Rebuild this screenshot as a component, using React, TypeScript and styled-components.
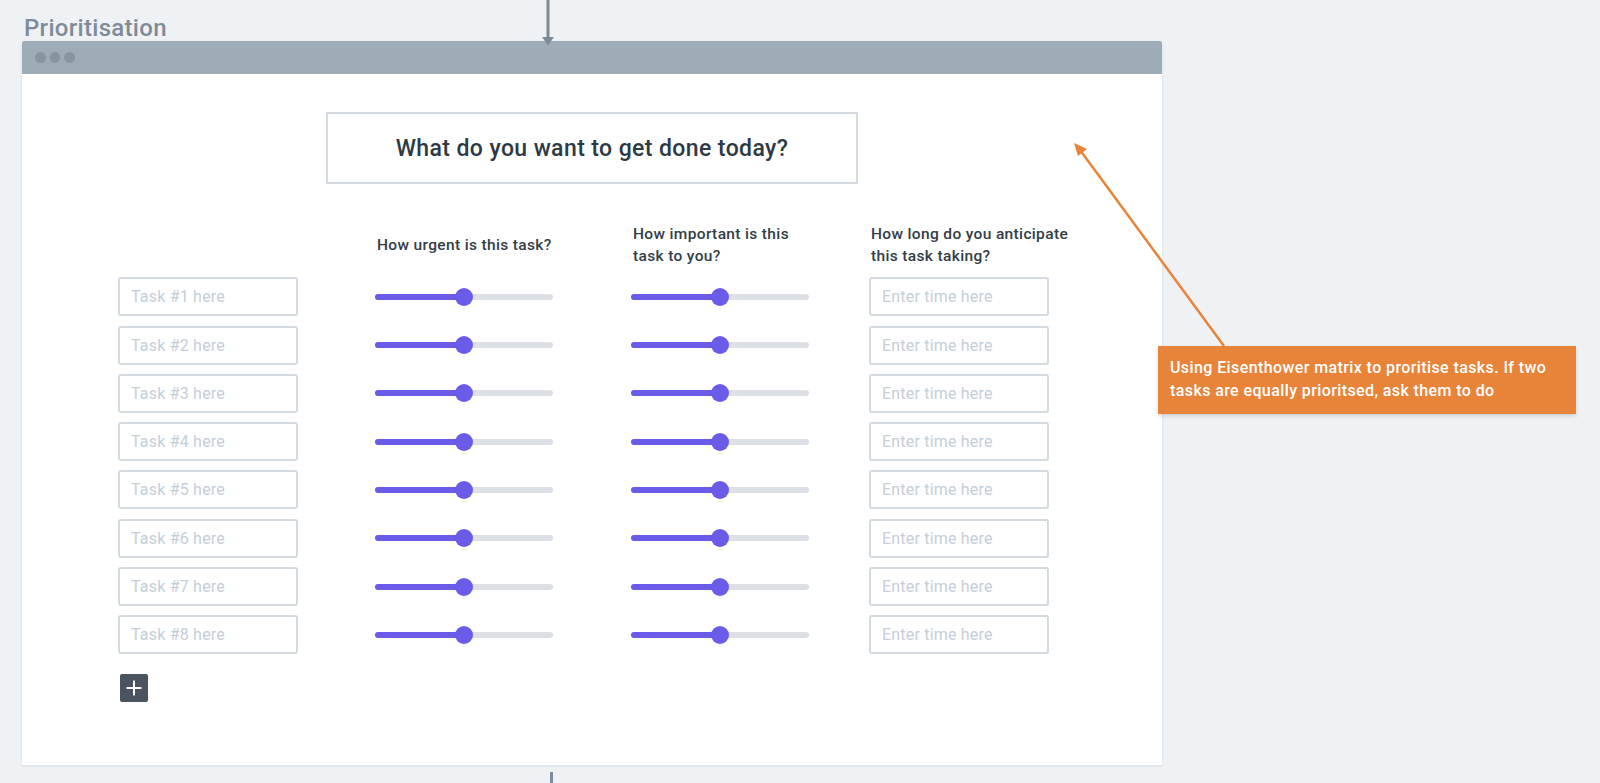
import React from 'react';
import styled, { createGlobalStyle } from 'styled-components';

const GlobalStyle = createGlobalStyle`
  html, body { margin: 0; padding: 0; }
  body {
    background: #eff2f5;
    font-family: Roboto, "Noto Sans", "Liberation Sans", sans-serif;
    overflow: hidden;
  }
`;

const tasks = [1, 2, 3, 4, 5, 6, 7, 8];

const App = () => {
  return (
    <>
      <GlobalStyle />
      <Canvas>
        <Connectors width="1600" height="783" viewBox="0 0 1600 783">
          <line x1="548" y1="0" x2="548" y2="39" stroke="#7d8b99" strokeWidth="3" />
          <path d="M542 37 L548 45.5 L554 37 Z" fill="#7d8b99" />
          <line x1="551.5" y1="772" x2="551.5" y2="783" stroke="#7d8b99" strokeWidth="3" />
          <line x1="1224" y1="346" x2="1080" y2="150" stroke="#e8843a" strokeWidth="2.5" />
          <path d="M1074 143 L1087 149 L1078 156 Z" fill="#e8843a" />
        </Connectors>

        <FrameTitle>Prioritisation</FrameTitle>

        <Window>
          <TitleBar>
            <Dot />
            <Dot />
            <Dot />
          </TitleBar>
          <Body>
            <Heading>What do you want to get done today?</Heading>
            <Grid>
              <ColHeader />
              <ColHeader>How urgent is this task?</ColHeader>
              <ColHeader>How important is this<br />task to you?</ColHeader>
              <ColHeader>How long do you anticipate<br />this task taking?</ColHeader>
              {tasks.map(n => (
                <React.Fragment key={n}>
                  <TextField placeholder={`Task #${n} here`} />
                  <Slider>
                    <Track>
                      <Fill style={{ width: '50%' }} />
                      <Thumb style={{ left: '50%' }} />
                    </Track>
                  </Slider>
                  <Slider>
                    <Track>
                      <Fill style={{ width: '50%' }} />
                      <Thumb style={{ left: '50%' }} />
                    </Track>
                  </Slider>
                  <TextField placeholder="Enter time here" />
                </React.Fragment>
              ))}
            </Grid>
            <AddButton aria-label="Add task">
              <svg width="18" height="18" viewBox="0 0 18 18">
                <path d="M9 1.5 V16.5 M1.5 9 H16.5" stroke="#fff" strokeWidth="2" />
              </svg>
            </AddButton>
          </Body>
        </Window>

        <Note>
          Using Eisenthower matrix to proritise tasks. If two<br />
          tasks are equally prioritsed, ask them to do
        </Note>
      </Canvas>
    </>
  );
};

// --- styles ---

const Canvas = styled.div`
  position: relative;
  width: 1600px;
  height: 783px;
`;

const Connectors = styled.svg`
  position: absolute;
  left: 0;
  top: 0;
  pointer-events: none;
  z-index: 2;
`;

const FrameTitle = styled.div`
  position: absolute;
  left: 24px;
  top: 14px;
  font-size: 24px;
  font-weight: 500;
  color: #7e8c9a;
  letter-spacing: 0.3px;
`;

const Window = styled.div`
  position: absolute;
  left: 22px;
  top: 41px;
  width: 1140px;
  height: 724px;
  background: #fff;
  box-shadow: 0 1px 3px rgba(60, 75, 90, 0.12);
  display: flex;
  flex-direction: column;
`;

const TitleBar = styled.div`
  height: 33px;
  background: #9eacb8;
  border-radius: 2px 2px 0 0;
  display: flex;
  align-items: center;
  gap: 4px;
  padding-left: 13px;
`;

const Dot = styled.span`
  width: 10.5px;
  height: 10.5px;
  border-radius: 50%;
  background: #8795a2;
`;

const Body = styled.div`
  flex: 1;
  padding: 38px 0 0 96px;
  display: flex;
  flex-direction: column;
`;

const Heading = styled.div`
  align-self: center;
  margin-left: -96px;
  width: 528px;
  height: 68px;
  border: 2px solid #d3dae1;
  display: flex;
  align-items: center;
  justify-content: center;
  font-size: 23px;
  letter-spacing: 0.4px;
  font-weight: 500;
  color: #2d3a46;
`;

const Grid = styled.div`
  margin-top: 38px;
  display: grid;
  grid-template-columns: 257px 256px 238px 180px;
  grid-template-rows: 46px;
  grid-auto-rows: 39px;
  row-gap: 9.3px;
  align-items: center;
`;

const ColHeader = styled.div`
  font-size: 15.5px;
  letter-spacing: 0.35px;
  line-height: 22.5px;
  font-weight: 500;
  color: #333d47;
  margin-left: 2px;
  white-space: nowrap;
`;

const TextField = styled.input`
  box-sizing: border-box;
  width: 180px;
  height: 39px;
  border: 2px solid #d3dae1;
  border-radius: 3px;
  padding: 0 11px;
  font-family: inherit;
  font-size: 16px;
  letter-spacing: 0.2px;
  color: #2d3a46;
  outline: none;
  &::placeholder { color: #c5ced8; }
`;

const Slider = styled.div`
  width: 178px;
  display: flex;
  align-items: center;
  height: 39px;
`;

const Track = styled.div`
  position: relative;
  width: 100%;
  height: 6px;
  border-radius: 3px;
  background: #dde1e6;
`;

const Fill = styled.div`
  height: 100%;
  border-radius: 3px;
  background: #6a5ce8;
`;

const Thumb = styled.div`
  position: absolute;
  top: 50%;
  width: 18px;
  height: 18px;
  margin: -9px 0 0 -9px;
  border-radius: 50%;
  background: #6a5ce8;
`;

const AddButton = styled.button`
  margin: 20px 0 0 2px;
  width: 28px;
  height: 28px;
  border: none;
  border-radius: 2px;
  background: #4a5561;
  display: flex;
  align-items: center;
  justify-content: center;
  padding: 0;
`;

const Note = styled.div`
  position: absolute;
  left: 1158px;
  top: 346px;
  width: 418px;
  height: 68px;
  box-sizing: border-box;
  padding: 11px 12px;
  background: #e8843a;
  box-shadow: 0 2px 4px rgba(0, 0, 0, 0.15);
  color: #fff;
  font-size: 16px;
  letter-spacing: 0.4px;
  line-height: 22.5px;
  font-weight: 500;
  z-index: 1;
`;

export default App;
